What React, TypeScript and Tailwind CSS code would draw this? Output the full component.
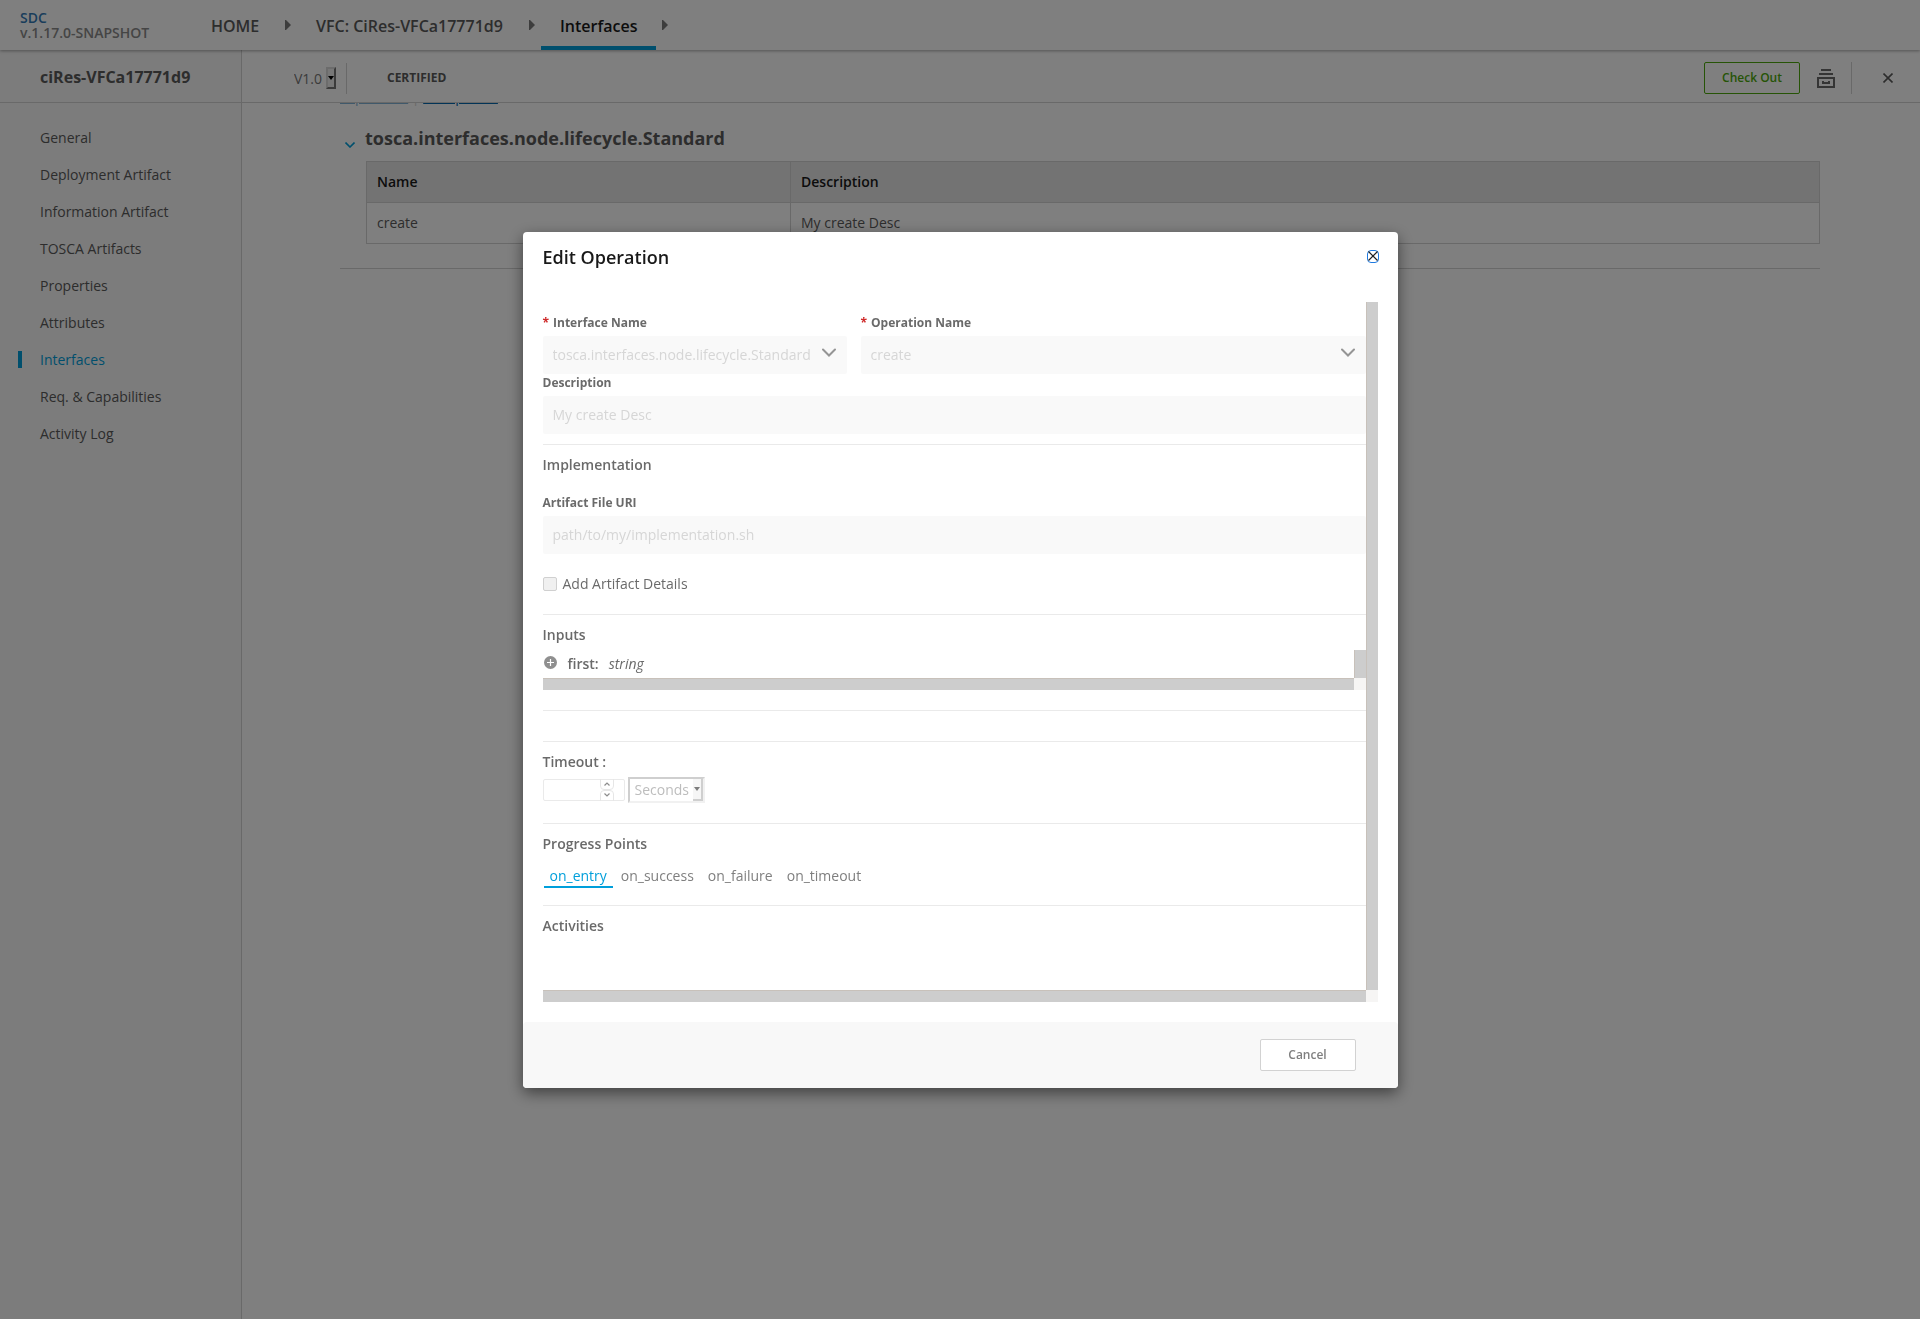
import type { ReactNode } from "react";

const menuItems = [
  "General",
  "Deployment Artifact",
  "Information Artifact",
  "TOSCA Artifacts",
  "Properties",
  "Attributes",
  "Interfaces",
  "Req. & Capabilities",
  "Activity Log",
];

const progressPoints = ["on_entry", "on_success", "on_failure", "on_timeout"];

const BreadcrumbArrow = () => (
  <svg className="w-[6px] h-[10px] mb-[2px] shrink-0" viewBox="0 0 6 10" fill="#7a7a7a">
    <path d="M0 0L1 0L6 5L1 10L0 10Z" />
  </svg>
);

const TopNav = () => (
  <header className="relative z-10 h-[50px] bg-white flex items-stretch shadow-[0_1px_3px_rgba(0,0,0,0.35)]">
    <div className="w-[211px] pl-5 flex flex-col justify-center text-sm leading-[15px] font-semibold">
      <a href="#sdc" className="text-[#337ab7]">SDC</a>
      <span className="text-[#8a8a8a]">v.1.17.0-SNAPSHOT</span>
    </div>
    <nav className="flex items-center text-base pt-px font-semibold">
      <a href="#home" className="w-12 text-[#5a5a5a]">HOME</a>
      <span className="w-[57px] pl-[26px]">
        <BreadcrumbArrow />
      </span>
      <a href="#vfc" className="text-[#5a5a5a]">VFC: CiRes-VFCa17771d9</a>
      <span className="w-[38px] pl-[26px]">
        <BreadcrumbArrow />
      </span>
      <a
        href="#interfaces"
        className="self-stretch flex items-center px-[19px] pt-1 border-b-4 border-[#009fdb] text-[#191919]"
      >
        Interfaces
      </a>
      <span className="pl-[6px]">
        <BreadcrumbArrow />
      </span>
    </nav>
  </header>
);

const Sidebar = () => (
  <aside className="w-[242px] shrink-0 bg-[#f8f8f8] border-r border-[#d2d2d2] text-[#5a5a5a]">
    <h1 className="h-[53px] pl-10 pt-[15px] border-b border-[#d2d2d2] text-base leading-6 font-bold">
      ciRes-VFCa17771d9
    </h1>
    <ul className="pt-4 text-sm">
      {menuItems.map((item) => (
        <li key={item} className="h-[37px] flex items-center">
          <span
            className={
              item === "Interfaces"
                ? "w-1 h-[17px] ml-[18px] mr-[18px] bg-[#009fdb]"
                : "w-1 h-[17px] ml-[18px] mr-[18px]"
            }
          />
          <a href="#menu" className={item === "Interfaces" ? "text-[#009fdb]" : ""}>
            {item}
          </a>
        </li>
      ))}
    </ul>
  </aside>
);

const ArchiveIcon = () => (
  <svg className="w-[18px] h-[19px]" viewBox="0 0 18 19" fill="none" stroke="#6a6a6a" strokeWidth="2">
    <path d="M4 1H14M2 5H16" />
    <path d="M1 9H17V18H1Z" />
    <path d="M6 12V14H12V12" />
  </svg>
);

const Toolbar = () => (
  <div className="h-[53px] shrink-0 border-b border-[#d2d2d2] flex items-center pt-1 pl-[52px] pr-[27px]">
    <div className="flex items-center text-sm text-[#777777]">
      <select aria-label="Version" className="appearance-none w-8 pt-px text-[#777777]" defaultValue="V1.0">
        <option>V1.0</option>
      </select>
      <span className="w-[10px] h-[22px] bg-[#efefef] border-2 border-t-[#d8d8d8] border-l-[#d8d8d8] border-r-[#767676] border-b-[#767676] flex items-center justify-center">
        <svg className="w-[6px] h-[4px] shrink-0" viewBox="0 0 6 4" fill="#000">
          <path d="M0 0H6L3 4Z" />
        </svg>
      </span>
    </div>
    <div className="w-px h-[31px] ml-[10px] bg-[#d2d2d2]" />
    <span className="ml-10 text-xs font-bold text-[#5a5a5a]">CERTIFIED</span>
    <button className="ml-auto w-24 h-8 border border-[#4ca90c] rounded-[2px] text-xs font-semibold text-[#4ca90c]">
      Check Out
    </button>
    <button aria-label="Archive" className="ml-[17px]">
      <ArchiveIcon />
    </button>
    <div className="w-px h-8 ml-4 bg-[#d2d2d2]" />
    <button aria-label="Close" className="ml-[31px]">
      <svg className="w-[10px] h-[10px]" viewBox="0 0 10 10" stroke="#5a5a5a" strokeWidth="1.6">
        <path d="M0.500 0.500L9.500 9.500M9.500 0.500L0.500 9.500" />
      </svg>
    </button>
  </div>
);

const Workspace = () => (
  <main className="flex-1 min-w-0 bg-white flex flex-col">
    <Toolbar />
    <div className="flex-1 overflow-hidden pl-[98px] pr-[100px] text-sm text-[#5a5a5a]">
      {/* list toolbar, scrolled almost out of view */}
      <div className="-mt-4 h-5 flex leading-5 text-[#0568ae]">
        <a href="#expand" className="underline opacity-50">Expand All</a>
        <span className="w-[15px] text-center text-[#d2d2d2]">|</span>
        <a href="#collapse" className="underline">Collapse All</a>
      </div>
      <section className="mt-[17px] pb-6 border-b border-[#d2d2d2]">
        <h2 className="flex items-center h-[27px] text-lg leading-6 font-bold">
          <svg className="w-[10px] h-[6px] ml-[5px] mr-[10px] mt-[15px]" viewBox="0 0 10 6" fill="none" stroke="#009fdb" strokeWidth="1.6">
            <path d="M0.500 0.500L5 5L9.500 0.500" />
          </svg>
          tosca.interfaces.node.lifecycle.Standard
        </h2>
        <div className="pl-[26px] pt-[10px]">
          <table className="w-full table-fixed border-collapse text-left">
            <thead>
              <tr className="h-[41px] bg-[#e6e6e6] text-[#191919]">
                <th className="w-[424px] px-[10px] border border-[#d2d2d2] font-semibold">Name</th>
                <th className="px-[10px] border border-[#d2d2d2] font-semibold">Description</th>
              </tr>
            </thead>
            <tbody>
              <tr className="h-[41px]">
                <td className="px-[10px] border border-[#d2d2d2]">create</td>
                <td className="px-[10px] border border-[#d2d2d2]">My create Desc</td>
              </tr>
            </tbody>
          </table>
        </div>
      </section>
    </div>
  </main>
);

const fieldBox =
  "block w-full h-[38px] px-[10px] rounded-[2px] bg-[#f9f9f9] text-sm text-[#d6d6d6] opacity-100 appearance-none";

type FieldProps = { label: string; value: string; required?: boolean; select?: boolean; className?: string };

const Field = ({ label, value, required, select, className = "" }: FieldProps) => (
  <label className={className}>
    <span className="block pt-px mb-[5px] text-xs leading-4 font-bold text-[#6a6a6a]">
      {required && <span className="mr-1 text-[#cf2a2a]">*</span>}
      {label}
    </span>
    {select ? (
      <span className="block relative">
        <select disabled className={fieldBox} defaultValue={value}>
          <option>{value}</option>
        </select>
        <svg className="absolute right-[11px] top-3 w-[14px] h-[9px]" viewBox="0 0 14 9" fill="none" stroke="#959595" strokeWidth="2" strokeLinecap="round">
          <path d="M1 1.500L7 7.500L13 1.500" />
        </svg>
      </span>
    ) : (
      <input disabled className={fieldBox} defaultValue={value} />
    )}
  </label>
);

const Section = ({ title, className = "", children }: { title: string; className?: string; children?: ReactNode }) => (
  <section className={`border-t border-[#eaeaea] pt-[10px] ${className}`}>
    <h3 className="text-sm leading-5 font-semibold text-[#6a6a6a]">{title}</h3>
    {children}
  </section>
);

const InputsSection = () => (
  <Section title="Inputs" className="pb-5">
    <div className="mt-[5px] grid grid-cols-[1fr_12px] grid-rows-[28px_12px]">
      <div className="flex items-center text-sm text-[#6a6a6a]">
        <button aria-label="Expand first" className="ml-px pb-[2px]">
          <svg className="w-[13px] h-[13px]" viewBox="0 0 13 13">
            <circle cx="6.500" cy="6.500" r="6.500" fill="#8f8f8f" />
            <path d="M3 6.500H10M6.500 3V10" stroke="#fff" strokeWidth="1.2" />
          </svg>
        </button>
        <span className="ml-[11px] font-semibold">first:</span>
        <em className="ml-[10px]">string</em>
      </div>
      <div className="bg-[#cdcdcd] border-l border-[#c8c1ba]" />
      <div className="bg-[#cdcdcd] border-t border-[#c8c1ba]" />
      <div className="bg-[#f6f5f4]" />
    </div>
  </Section>
);

const TimeoutSection = () => (
  <Section title="Timeout :" className="pb-5">
    <div className="mt-[5px] h-[26px] flex items-center">
      <div className="relative w-[82px] h-[22px]">
        <input
          disabled
          aria-label="Timeout"
          className="block w-full h-full border border-[#eaeaea] rounded-[2px] bg-white"
        />
        <svg className="absolute left-[57px] top-0 w-[14px] h-[22px]" viewBox="0 0 14 22" fill="none">
          <path d="M0.500 0V7Q0.500 10.500 4 10.500H10Q13.500 10.500 13.500 7V0M0.500 22V15Q0.500 11.500 4 11.500H10Q13.500 11.500 13.500 15V22" stroke="#e6e6e6" />
          <path d="M4.500 6.500L7 4L9.500 6.500M4.500 14.500L7 17L9.500 14.500" stroke="#8c8c8c" strokeWidth="1.2" />
        </svg>
      </div>
      <div className="relative ml-[3px]">
        <select
          disabled
          aria-label="Timeout unit"
          defaultValue="Seconds"
          className="block appearance-none opacity-100 w-[77px] h-[26px] pl-[5px] border-2 border-t-[#cfcfcf] border-l-[#cfcfcf] border-r-[#f1f1f1] border-b-[#f1f1f1] bg-white text-sm leading-5 text-[#bdbdbd]"
        >
          <option>Seconds</option>
        </select>
        <span className="absolute right-[2px] top-[2px] w-[10px] h-[22px] bg-[#f6f6f6] border-r-2 border-b-2 border-[#cfcfcf] flex items-center justify-center">
          <svg className="w-[6px] h-[4px] shrink-0" viewBox="0 0 6 4" fill="#7d7d7d">
            <path d="M0 0H6L3 4Z" />
          </svg>
        </span>
      </div>
    </div>
  </Section>
);

const EditOperationModal = () => (
  <div
    role="dialog"
    aria-label="Edit Operation"
    className="w-[875px] max-w-full bg-white rounded-[4px] shadow-[0_5px_15px_rgba(0,0,0,0.5)]"
  >
    <div className="h-[70px] px-5 pt-[13px] flex items-start justify-between">
      <h2 className="text-lg leading-6 font-semibold text-[#191919]">Edit Operation</h2>
      <button
        aria-label="Close dialog"
        className="mt-[5px] mr-[-1px] w-3 h-[13px] rounded-[4px] border border-[#1f7ae0] flex items-center justify-center"
      >
        <svg className="w-[10px] h-[10px] shrink-0" viewBox="0 0 10 10" stroke="#222" strokeWidth="1.2">
          <path d="M0.500 0.500L9.500 9.500M9.500 0.500L0.500 9.500" />
        </svg>
      </button>
    </div>
    <div className="mx-5 grid grid-cols-[1fr_12px] grid-rows-[688px_12px]">
      <div className="pt-3 min-w-0">
        <div className="flex gap-[14px]">
          <Field label="Interface Name" value="tosca.interfaces.node.lifecycle.Standard" required select className="w-[304px]" />
          <Field label="Operation Name" value="create" required select className="flex-1" />
        </div>
        <Field label="Description" value="My create Desc" className="block mb-[10px]" />
        <Section title="Implementation" className="pb-5">
          <Field label="Artifact File URI" value="path/to/my/implementation.sh" className="block mt-[19px]" />
          <label className="mt-5 h-5 flex items-center text-sm text-[#6a6a6a]">
            <input
              type="checkbox"
              disabled
              className="appearance-none w-[14px] h-[14px] mr-[6px] border border-[#d0d0d0] rounded-[2px] bg-[#f0f0f0]"
            />
            Add Artifact Details
          </label>
        </Section>
        <InputsSection />
        <div className="h-[31px] border-t border-[#eaeaea]" />
        <TimeoutSection />
        <Section title="Progress Points" className="pb-[17px]">
          <div role="tablist" className="mt-3 ml-px flex gap-[2px] text-sm leading-5 text-[#7f7f7f]">
            {progressPoints.map((point) => (
              <button
                key={point}
                role="tab"
                className={
                  point === "on_entry"
                    ? "px-[6px] border-b-2 border-[#009fdb] text-[#009fdb]"
                    : "px-[6px] border-b-2 border-transparent"
                }
              >
                {point}
              </button>
            ))}
          </div>
        </Section>
        <Section title="Activities" />
      </div>
      <div className="bg-[#cdcdcd] border-l border-[#c8c1ba]" />
      <div className="bg-[#cdcdcd] border-t border-[#c8c1ba]" />
      <div className="bg-[#f6f5f4]" />
    </div>
    <div className="mt-5 h-[66px] pr-[42px] rounded-[4px] bg-[#f8f8f8] flex items-center justify-end">
      <button className="w-24 h-8 border border-[#d2d2d2] rounded-[2px] bg-white text-xs font-semibold text-[#7f7f7f]">
        Cancel
      </button>
    </div>
  </div>
);

const App = () => {
  return (
    <div className="min-h-screen flex flex-col bg-white font-['Open_Sans',sans-serif]">
      <TopNav />
      <div className="flex-1 flex">
        <Sidebar />
        <Workspace />
      </div>
      <div className="fixed inset-0 z-20 bg-black/50 flex items-center justify-center">
        <EditOperationModal />
      </div>
    </div>
  );
};

export default App;
